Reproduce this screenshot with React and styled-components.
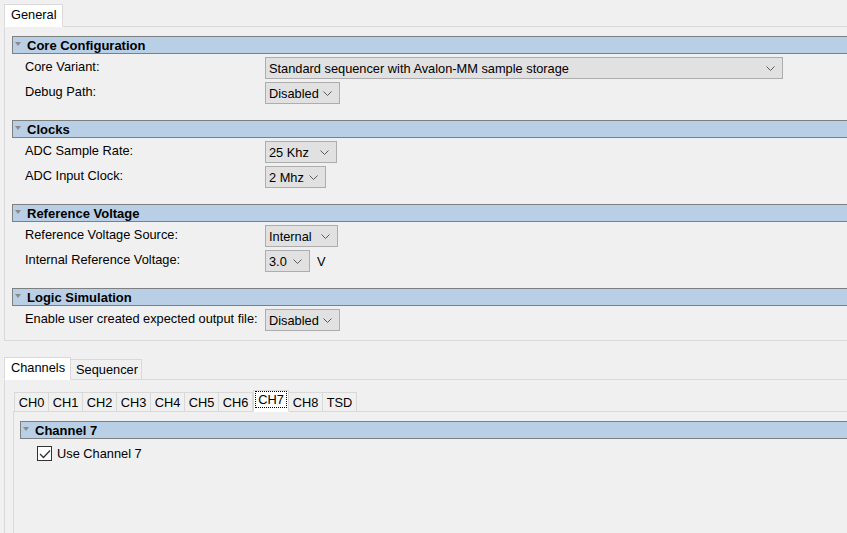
import styled, { createGlobalStyle } from "styled-components";
import * as React from "react";

const GlobalStyle = createGlobalStyle`
  html, body {
    margin: 0;
    padding: 0;
    background: #f0f0f0;
  }
  body {
    font-family: "Liberation Sans", Arial, sans-serif;
    font-size: 12.8px;
    color: #000;
  }
`;

const sections = [
  {
    title: "Core Configuration",
    rows: [
      { label: "Core Variant:", value: "Standard sequencer with Avalon-MM sample storage", width: 518 },
      { label: "Debug Path:", value: "Disabled", width: 75 },
    ],
  },
  {
    title: "Clocks",
    rows: [
      { label: "ADC Sample Rate:", value: "25 Khz", width: 72 },
      { label: "ADC Input Clock:", value: "2 Mhz", width: 61 },
    ],
  },
  {
    title: "Reference Voltage",
    rows: [
      { label: "Reference Voltage Source:", value: "Internal", width: 73 },
      { label: "Internal Reference Voltage:", value: "3.0", width: 45, unit: "V" },
    ],
  },
  {
    title: "Logic Simulation",
    rows: [
      { label: "Enable user created expected output file:", value: "Disabled", width: 75 },
    ],
  },
];

const channels = ["CH0", "CH1", "CH2", "CH3", "CH4", "CH5", "CH6", "CH7", "CH8", "TSD"];

function Chevron() {
  return (
    <svg width="9" height="5" viewBox="0 0 9 5">
      <path d="M0.5 0.5 L4.5 4.5 L8.5 0.5" fill="none" stroke="#5a5a5a" strokeWidth="1" />
    </svg>
  );
}

function Combo({ value, width }) {
  return (
    <Select style={{ width }}>
      <span>{value}</span>
      <Chevron />
    </Select>
  );
}

function Section({ title, rows }) {
  return (
    <SectionBox>
      <Header>
        <Arrow />
        {title}
      </Header>
      <Rows>
        {rows.map((r) => (
          <Row key={r.label}>
            <Label>{r.label}</Label>
            <Combo value={r.value} width={r.width} />
            {r.unit && <Unit>{r.unit}</Unit>}
          </Row>
        ))}
      </Rows>
    </SectionBox>
  );
}

export default function App() {
  return (
    <>
      <GlobalStyle />
      <Page>
        <TabStrip>
          <Tab $active>General</Tab>
        </TabStrip>
        <GeneralPanel>
          {sections.map((s) => (
            <Section key={s.title} {...s} />
          ))}
        </GeneralPanel>

        <LowerTabs>
          <Tab $active>Channels</Tab>
          <Tab>Sequencer</Tab>
        </LowerTabs>
        <ChannelsPanel>
          <ChannelTabs>
            {channels.map((c) => (
              <ChTab key={c} $active={c === "CH7"}>
                {c === "CH7" ? <Focus>{c}</Focus> : c}
              </ChTab>
            ))}
          </ChannelTabs>
          <ChannelBody>
            <Header>
              <Arrow />
              Channel 7
            </Header>
            <CheckRow>
              <CheckBox>
                <svg width="12" height="10" viewBox="0 0 12 10">
                  <path d="M1 5 L4.5 8.5 L11 1.5" fill="none" stroke="#333" strokeWidth="1.3" />
                </svg>
              </CheckBox>
              Use Channel 7
            </CheckRow>
          </ChannelBody>
        </ChannelsPanel>
      </Page>
    </>
  );
}

const Page = styled.div`
  width: 847px;
  height: 533px;
  overflow: hidden;
  background: #f0f0f0;
  display: flex;
  flex-direction: column;
`;

const TabStrip = styled.div`
  display: flex;
  padding: 4px 0 0 4px;
  height: 22px;
`;

const LowerTabs = styled(TabStrip)`
  margin-top: 16px;
  height: 22px;
  padding-top: 0;
  align-items: flex-end;
`;

const Tab = styled.div`
  box-sizing: border-box;
  display: flex;
  align-items: center;
  padding: ${(p) => (p.$active ? "0 5px 0 6px" : "2px 3px 0 5px")};
  height: ${(p) => (p.$active ? "23px" : "21px")};
  margin-bottom: -1px;
  background: ${(p) => (p.$active ? "#fff" : "#f0f0f0")};
  border: 1px solid #d9d9d9;
  border-bottom: ${(p) => (p.$active ? "1px solid #fff" : "1px solid #d9d9d9")};
  margin-left: ${(p) => (p.$active ? "0" : "-1px")};
  position: relative;
  z-index: ${(p) => (p.$active ? 1 : 0)};
  line-height: 1;
`;

const GeneralPanel = styled.div`
  box-sizing: border-box;
  margin-left: 4px;
  height: 315px;
  border-top: 1px solid #d9d9d9;
  border-left: 1px solid #d9d9d9;
  border-bottom: 1px solid #d9d9d9;
  padding: 9px 0 0 7px;
  display: flex;
  flex-direction: column;
  gap: 16px;
`;

const SectionBox = styled.div`
  display: flex;
  flex-direction: column;
`;

const Header = styled.div`
  box-sizing: border-box;
  height: 18px;
  background: #b8cfe5;
  border-top: 1px solid #7f7f7f;
  border-bottom: 1px solid #7f7f7f;
  border-left: 1px solid #7f7f7f;
  display: flex;
  align-items: center;
  font-weight: bold;
  font-size: 13px;
  padding-left: 2px;
`;

const Arrow = styled.span`
  width: 0;
  height: 0;
  border-left: 3.5px solid transparent;
  border-right: 3.5px solid transparent;
  border-top: 4px solid #8a8a8a;
  margin: 0 6px 3px 0;
`;

const Rows = styled.div`
  display: flex;
  flex-direction: column;
  gap: 3px;
  padding: 3px 0 0 13px;
`;

const Row = styled.div`
  display: flex;
  align-items: center;
  height: 22px;
`;

const Label = styled.div`
  width: 240px;
  flex-shrink: 0;
  margin-top: -4px;
`;

const Select = styled.div`
  box-sizing: border-box;
  height: 22px;
  background: #e1e1e1;
  border: 1px solid #adadad;
  display: flex;
  align-items: center;
  justify-content: space-between;
  padding: 0 7px 0 3px;
  white-space: nowrap;
`;

const Unit = styled.span`
  margin-left: 7px;
`;

const ChannelsPanel = styled.div`
  box-sizing: border-box;
  flex: 1;
  margin-left: 4px;
  border-top: 1px solid #d9d9d9;
  border-left: 1px solid #d9d9d9;
  padding: 11px 0 0 9px;
  display: flex;
  flex-direction: column;
`;

const ChannelTabs = styled.div`
  display: flex;
  height: 20px;
  align-items: flex-end;
`;

const ChTab = styled.div`
  box-sizing: border-box;
  width: ${(p) => (p.$active ? "36px" : "35px")};
  margin-left: ${(p) => (p.$active ? "0" : "-1px")};
  height: ${(p) => (p.$active ? "22px" : "20px")};
  margin-bottom: -1px;
  border: 1px solid #d9d9d9;
  border-bottom-color: ${(p) => (p.$active ? "#fff" : "#d9d9d9")};
  background: ${(p) => (p.$active ? "#fff" : "#f0f0f0")};
  display: flex;
  align-items: ${(p) => (p.$active ? "flex-start" : "center")};
  justify-content: center;
  padding-top: 1px;
  position: relative;
  z-index: ${(p) => (p.$active ? 1 : 0)};
  &:first-child {
    margin-left: 0;
  }
`;

const Focus = styled.span`
  outline: 1px dotted #000;
  padding: 0 2px;
  line-height: 15px;
`;

const ChannelBody = styled.div`
  flex: 1;
  margin-left: -1px;
  border-top: 1px solid #d9d9d9;
  border-left: 1px solid #d9d9d9;
  padding: 9px 0 0 6px;
  display: flex;
  flex-direction: column;
`;

const CheckRow = styled.div`
  display: flex;
  align-items: center;
  gap: 5px;
  padding: 7px 0 0 17px;
`;

const CheckBox = styled.span`
  box-sizing: border-box;
  width: 15px;
  height: 15px;
  border: 1px solid #333;
  background: #fff;
  display: flex;
  align-items: center;
  justify-content: center;
`;
